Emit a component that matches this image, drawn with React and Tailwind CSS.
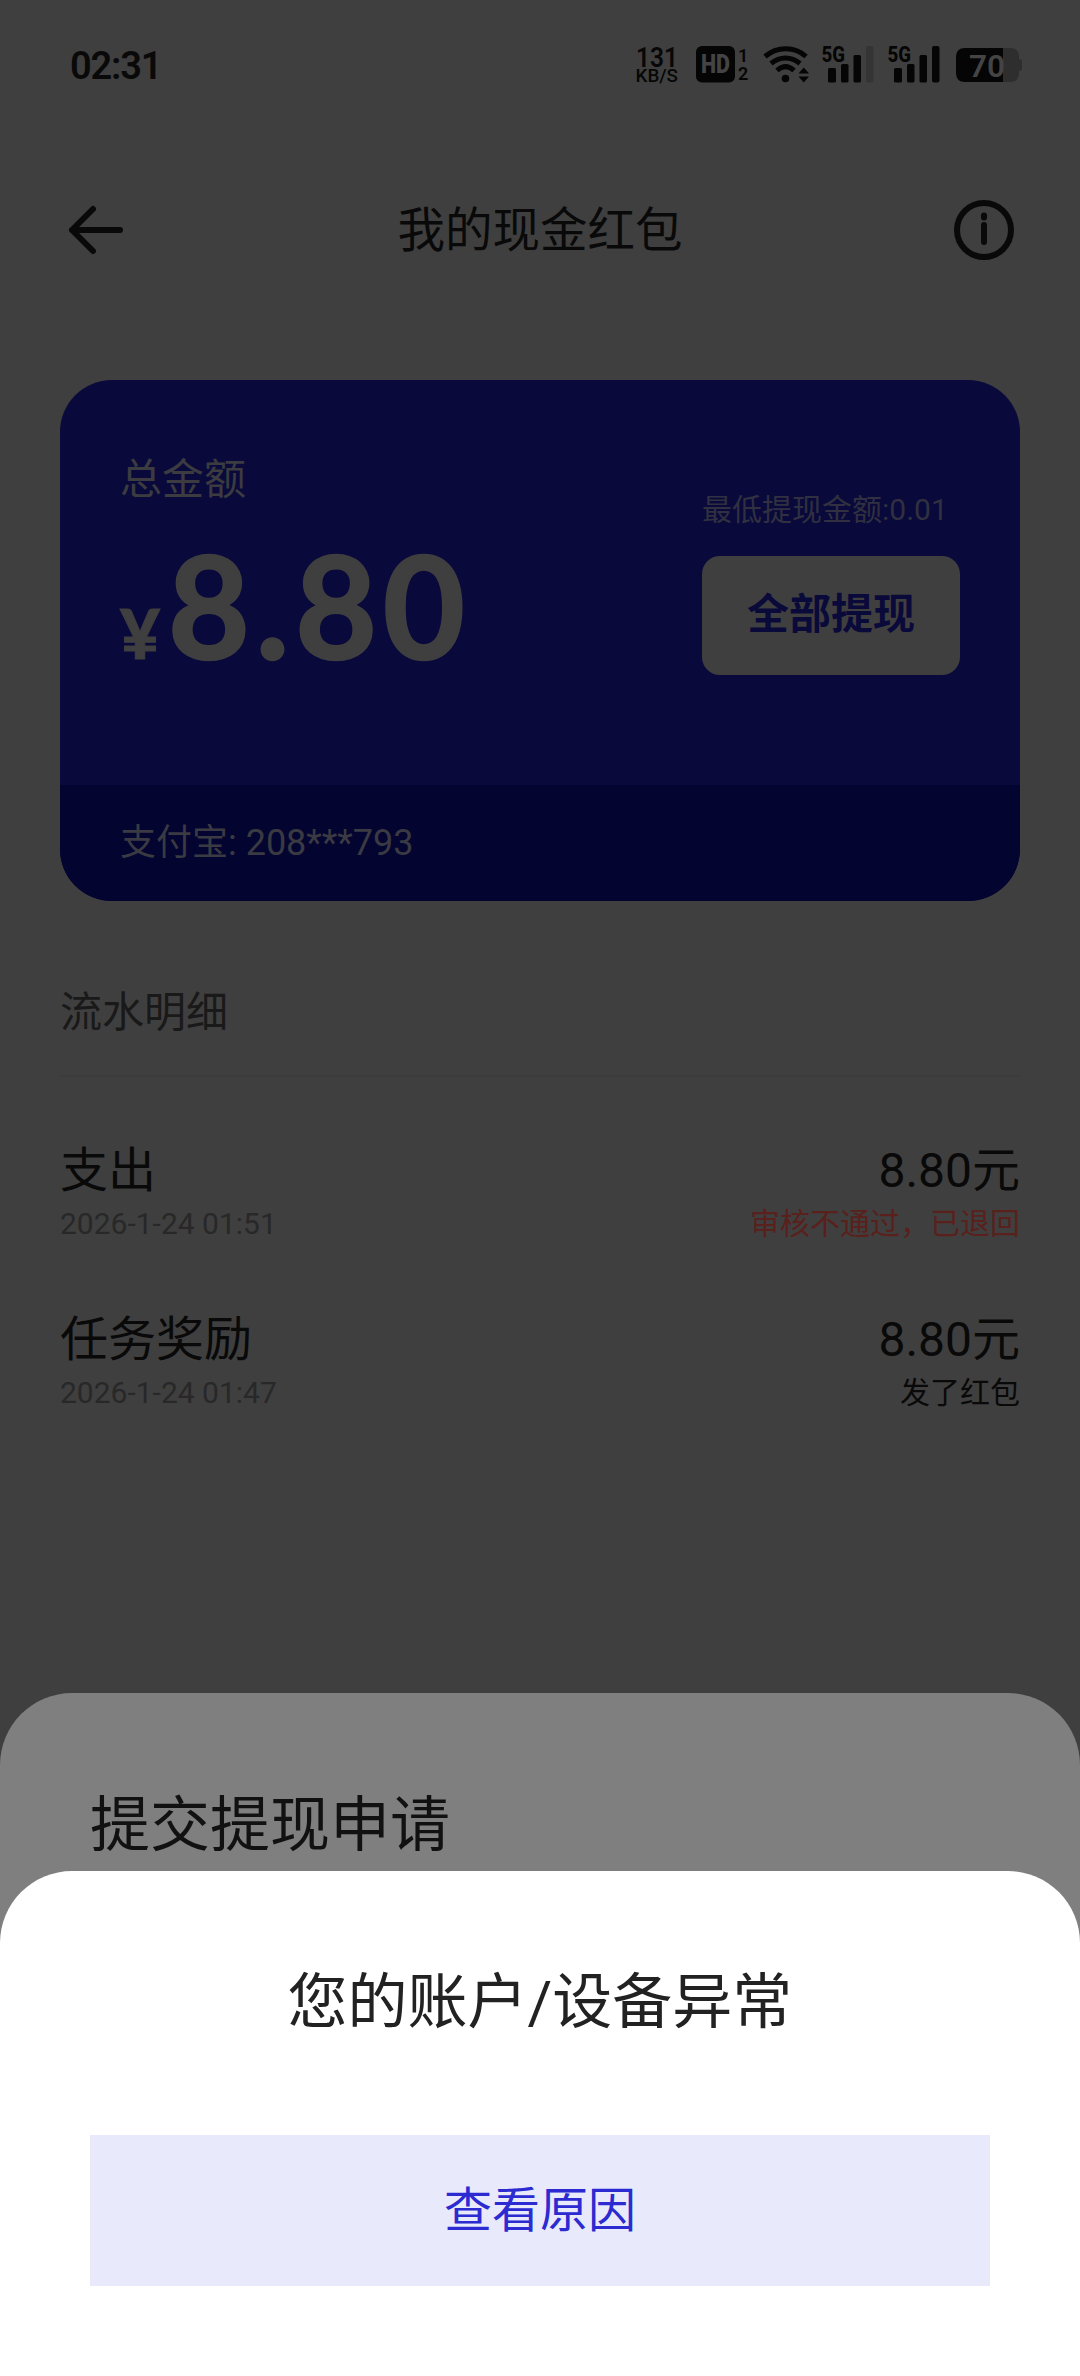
const records = [
  { title: "支出", time: "2026-1-24 01:51", amount: "8.80元", note: "审核不通过，已退回", noteClass: "text-[#5a201c]" },
  { title: "任务奖励", time: "2026-1-24 01:47", amount: "8.80元", note: "发了红包", noteClass: "text-[#090909]" },
];

function Signal({ full }) {
  return (
    <svg className="overflow-visible" width="52" height="38" viewBox="0 0 52 38" fill="#050505">
      <text x="-0.500" y="16.500" fontSize="22.500" fontWeight="800" fontFamily="Roboto" textLength="23.500" lengthAdjust="spacingAndGlyphs">5G</text>
      <rect x="6" y="23" width="8" height="14.5" rx="1.5" />
      <rect x="19" y="19" width="7.5" height="18.5" rx="1.5" />
      <rect x="31.5" y="10" width="7.5" height="27.5" rx="1.5" />
      <rect x="44" y="1" width="7.5" height="36.5" rx="2" fill={full ? "#050505" : "#343434"} />
    </svg>
  );
}

function StatusBar() {
  return (
    <div className="flex h-[130px] items-start justify-between pl-[70px] pr-[58px] pt-[45px] text-[#090909]">
      <div className="text-[38px] font-semibold leading-[42px] tracking-[-1.2px]">02:31</div>
      <div className="flex h-[38px] items-start">
        <svg className="overflow-visible" width="42" height="38" viewBox="0 0 42 38" fill="#070707" fontFamily="Roboto" fontWeight="600">
          <text x="-2" y="21.500" fontSize="28" textLength="42" lengthAdjust="spacingAndGlyphs">131</text>
          <text x="-2.500" y="37" fontSize="19" fontWeight="500" textLength="42.500" lengthAdjust="spacingAndGlyphs">KB/S</text>
        </svg>
        <svg className="ml-[16px] mr-px overflow-visible" width="52" height="38" viewBox="0 0 52 38" fontFamily="Roboto" fontWeight="600">
          <rect x="0" y="1" width="39" height="36.5" rx="6" fill="#050505" />
          <text x="5" y="28" fontSize="25" fill="#444444" fontWeight="900" textLength="29" lengthAdjust="spacingAndGlyphs">HD</text>
          <text x="42" y="17" fontSize="18" fill="#050505">1</text>
          <text x="42" y="34.500" fontSize="18" fill="#050505">2</text>
        </svg>
        <svg className="ml-[14px]" width="47" height="38" viewBox="0 0 47 38" fill="none" stroke="#050505" strokeWidth="5">
          <path d="M2 11.5C14 1 32 1 43 11.5" />
          <path d="M8 18.500C17 11 28 11 37 18.500" />
          <path d="M14 25.500C19.500 20.500 25.500 20.500 31 25.500" />
          <circle cx="22.500" cy="33.500" r="3.800" fill="#050505" stroke="none" />
          <path d="M35.500 28.500L40.800 22.500L46 28.500ZM35.500 31.500H46L40.800 37.500Z" fill="#050505" stroke="none" />
        </svg>
        <div className="ml-[12px]"><Signal /></div>
        <div className="ml-[14px]"><Signal full /></div>
        <svg className="ml-[16px]" width="66" height="38" viewBox="0 0 66 38">
          <path d="M47 3H54Q63 3 63 12V14Q66 14 66 17V23Q66 26 63 26V28Q63 37 54 37H47Z" fill="#2e2e2e" />
          <path d="M9 3H47V37H9Q0 37 0 28V12Q0 3 9 3Z" fill="#050505" />
          <text x="13" y="31.500" fontSize="32" fontWeight="600" fontFamily="Roboto" fill="#444444" textLength="36" lengthAdjust="spacingAndGlyphs">70</text>
        </svg>
      </div>
    </div>
  );
}

function Header() {
  return (
    <header className="flex h-[200px] items-center justify-between px-[66px] text-[#090909]">
      <svg width="60" height="60" viewBox="0 0 60 60" fill="none" stroke="#090909" strokeWidth="6" strokeLinecap="round" strokeLinejoin="round">
        <path d="M27 9L6 30L27 51M6 30H54" />
      </svg>
      <h1 className="pt-[2px] text-[47.5px] leading-[60px]">我的现金红包</h1>
      <svg width="60" height="60" viewBox="0 0 60 60" fill="none" stroke="#090909" strokeWidth="6">
        <circle cx="30" cy="30" r="27" />
        <path d="M30 25V42M30 15.500V17.500" strokeLinecap="round" />
      </svg>
    </header>
  );
}

function BalanceCard() {
  return (
    <section className="mx-[60px] mt-[50px] flex h-[521px] flex-col overflow-hidden rounded-[52px] bg-[#09093b]">
      <div className="flex h-[405px] justify-between px-[60px]">
        <div className="flex flex-col pt-[70px] text-[#3f3f3f]">
          <div className="text-[42px] leading-[60px] text-[#3b3b40]">总金额</div>
          <div className="mt-[20px] flex h-[150px] items-baseline font-['Lato'] font-bold leading-[150px]">
            <span className="w-[48px] text-[69px] font-black [-webkit-text-stroke:1px_#3f3f3f]">¥</span>
            <span className="text-[141px] tracking-[6px] [-webkit-text-stroke:2.5px_#3f3f3f]">8.80</span>
          </div>
        </div>
        <div className="flex w-[258px] flex-col pt-[110px]">
          <div className="whitespace-nowrap text-[30px] leading-[40px] text-[#303040]">最低提现金额:0.01</div>
          <button className="mt-[26px] h-[119px] rounded-[18px] bg-[#3f3f3f] pb-[3px] text-[42px] font-bold text-[#0a0a3a]">全部提现</button>
        </div>
      </div>
      <div className="flex h-[116px] items-center bg-[#040430] px-[60px] text-[36px] text-[#3a3a42]">支付宝: 208***793</div>
    </section>
  );
}

function Records() {
  return (
    <section className="mx-[60px] mt-[82px]">
      <h2 className="text-[42px] leading-[60px] text-[#191919]">流水明细</h2>
      <div className="mt-[32px] h-[2px] bg-[#3c3c3c]" />
      <ul className="mt-[64px] flex flex-col">
        {records.map((r) => (
          <li key={r.time} className="flex h-[169px] justify-between text-[#090909]">
            <div>
              <div className="text-[48px] leading-[60px]">{r.title}</div>
              <div className="text-[30px] leading-[46px] text-[#282828]">{r.time}</div>
            </div>
            <div className="text-right">
              <div className="text-[48px] leading-[60px]">{r.amount}</div>
              <div className={"text-[30px] leading-[46px] " + r.noteClass}>{r.note}</div>
            </div>
          </li>
        ))}
      </ul>
    </section>
  );
}

export default function App() {
  return (
    <div className="relative h-[2376px] w-[1080px] overflow-hidden bg-[#3f3f3f] font-['Roboto','Noto_Sans_CJK_SC',sans-serif]">
      <StatusBar />
      <Header />
      <BalanceCard />
      <Records />
      <div className="absolute inset-x-0 bottom-0 h-[683px] rounded-t-[72px] bg-[#7f7f7f] px-[90px] pt-[93px]">
        <h2 className="text-[60px] leading-[80px] text-[#111111]">提交提现申请</h2>
      </div>
      <div className="absolute inset-x-0 bottom-0 flex h-[505px] flex-col rounded-t-[72px] bg-white px-[90px] pt-[92px]">
        <h2 className="text-center text-[60px] leading-[80px] text-[#222222]">您的账户/设备异常</h2>
        <button className="mt-[92px] h-[151px] bg-[#e8eafc] text-[48px] text-[#2c2bd1]">查看原因</button>
      </div>
    </div>
  );
}
